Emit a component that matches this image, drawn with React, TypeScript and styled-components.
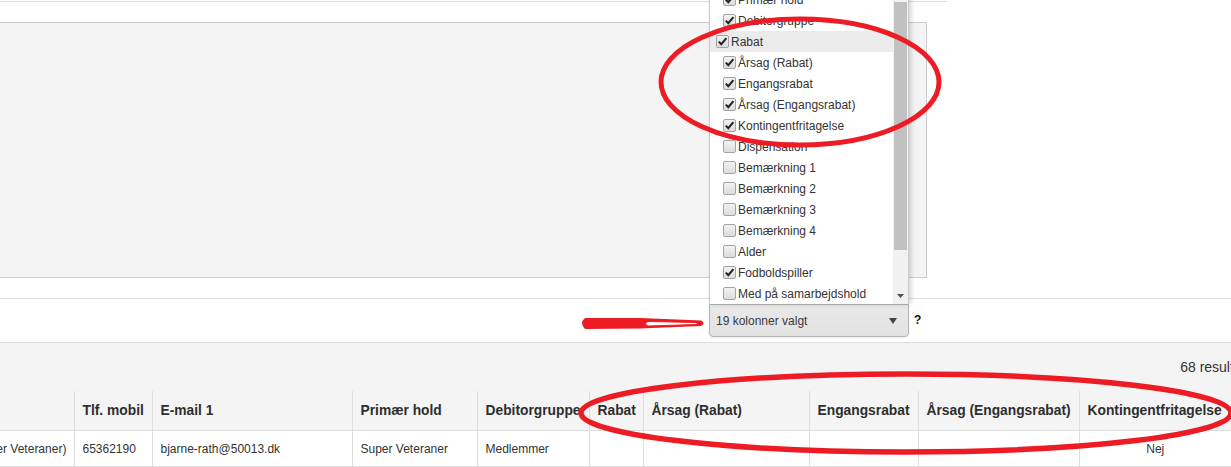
import React from 'react'
import styled, { createGlobalStyle } from 'styled-components'

const GlobalStyle = createGlobalStyle`
  html, body {
    margin: 0;
    padding: 0;
    background: #fff;
    overflow: hidden;
  }
  body {
    font-family: 'Liberation Sans', Arial, sans-serif;
    font-size: 12px;
    color: #333;
  }
`

const Page = styled.div`
  position: relative;
  width: 1231px;
  height: 467px;
  overflow: hidden;
`

const TopRule = styled.div`
  width: 947px;
  height: 20px;
  margin-top: 1px;
  border-top: 1px solid #ddd;
`

const FilterPanel = styled.div`
  width: 926px;
  height: 254px;
  margin-left: -1px;
  background: #f4f4f4;
  border: 1px solid #ccc;
`

const Gap = styled.div`
  height: 20px;
`

const Toolbar = styled.div`
  display: flex;
  align-items: flex-start;
  height: 45px;
  padding: 5px 0 0 709px;
  box-sizing: border-box;
  border-top: 1px solid #ddd;
  border-bottom: 1px solid #ddd;
`

const SelectWrap = styled.div`
  position: relative;
  width: 200px;
`

const Select = styled.div`
  display: flex;
  align-items: center;
  justify-content: space-between;
  height: 33px;
  box-sizing: border-box;
  padding: 0 11px 0 6px;
  background: linear-gradient(#e9e9e9, #e2e2e2);
  border: 1px solid #b4b4b4;
  border-radius: 0 0 4px 4px;
  box-shadow: 0 1px 2px rgba(0, 0, 0, 0.08);
  font-size: 12px;
  color: #3a3a3a;
`

const Caret = styled.span`
  width: 0;
  height: 0;
  border-left: 4px solid transparent;
  border-right: 4px solid transparent;
  border-top: 6px solid #444;
`

const Help = styled.span`
  margin-left: 5px;
  line-height: 33px;
  font-weight: bold;
  font-size: 12px;
  color: #111;
`

const Dropdown = styled.div`
  position: absolute;
  left: 0;
  bottom: 100%;
  width: 200px;
  height: 320px;
  box-sizing: border-box;
  display: flex;
  background: #fff;
  border: 1px solid #ccc;
  border-bottom: none;
  box-shadow: 2px 0 5px rgba(0, 0, 0, 0.18);
  z-index: 5;
`

const OptionList = styled.div`
  flex: 1;
  display: flex;
  flex-direction: column;
  justify-content: flex-end;
  overflow: hidden;
`

const Option = styled.div<{ $active?: boolean }>`
  flex: none;
  display: flex;
  align-items: center;
  height: 21px;
  padding-left: ${({ $active }) => ($active ? '6px' : '13px')};
  background: ${({ $active }) => ($active ? '#ebebeb' : 'transparent')};
  font-size: 12px;
  color: #333;
  white-space: nowrap;
`

const Box = styled.span`
  display: inline-flex;
  align-items: center;
  justify-content: center;
  width: 13px;
  height: 13px;
  box-sizing: border-box;
  margin-right: 2px;
  border: 1px solid #a3a3a3;
  border-radius: 2px;
  background: linear-gradient(#f2f2f2, #dcdcdc);
`

const Scrollbar = styled.div`
  width: 15px;
  display: flex;
  flex-direction: column;
  background: #f1f1f1;
`

const ScrollArrow = styled.div`
  height: 17px;
  display: flex;
  align-items: center;
  justify-content: center;
`

const Thumb = styled.div`
  height: 248px;
  margin: 0 1px;
  background: #c1c1c1;
`

const Track = styled.div`
  flex: 1;
`

const Results = styled.div`
  background: #f4f4f4;
  height: 200px;
`

const ResultsBar = styled.div`
  width: 1273px;
  height: 48px;
  box-sizing: border-box;
  display: flex;
  justify-content: flex-end;
  align-items: center;
  padding-right: 15px;
  font-size: 14px;
  color: #333;
`

const TableWrap = styled.div`
  overflow: hidden;
`

const Table = styled.table`
  margin-left: -37px;
  width: 1268px;
  table-layout: fixed;
  border-collapse: collapse;
`

const Th = styled.th`
  height: 39px;
  padding: 0 8px;
  text-align: left;
  vertical-align: middle;
  font-size: 13.8px;
  font-weight: bold;
  color: #2e2e2e;
  white-space: nowrap;
  border-left: 1px solid #ddd;
  border-bottom: 1px solid #ddd;
  &:first-child {
    border-left: none;
  }
`

const Td = styled.td<{ $center?: boolean }>`
  height: 35px;
  padding: 0 8px;
  text-align: ${({ $center }) => ($center ? 'center' : 'left')};
  font-size: 12px;
  color: #333;
  white-space: nowrap;
  background: #fff;
  border-left: 1px solid #ddd;
  border-bottom: 1px solid #ddd;
  &:first-child {
    border-left: none;
  }
`

const Annotations = styled.svg`
  position: absolute;
  left: 0;
  top: 0;
  pointer-events: none;
  z-index: 10;
`

const columns = [
  { title: '', width: 111 },
  { title: 'Tlf. mobil', width: 78 },
  { title: 'E-mail 1', width: 200 },
  { title: 'Primær hold', width: 125 },
  { title: 'Debitorgruppe', width: 112 },
  { title: 'Rabat', width: 54 },
  { title: 'Årsag (Rabat)', width: 166 },
  { title: 'Engangsrabat', width: 109 },
  { title: 'Årsag (Engangsrabat)', width: 161 },
  { title: 'Kontingentfritagelse', width: 152 },
]

const row = [
  '(Super Veteraner)',
  '65362190',
  'bjarne-rath@50013.dk',
  'Super Veteraner',
  'Medlemmer',
  '',
  '',
  '',
  '',
  'Nej',
]

const options = [
  { label: 'E-mail 1', checked: true },
  { label: 'Primær hold', checked: true },
  { label: 'Debitorgruppe', checked: true },
  { label: 'Rabat', checked: true, active: true },
  { label: 'Årsag (Rabat)', checked: true },
  { label: 'Engangsrabat', checked: true },
  { label: 'Årsag (Engangsrabat)', checked: true },
  { label: 'Kontingentfritagelse', checked: true },
  { label: 'Dispensation', checked: false },
  { label: 'Bemærkning 1', checked: false },
  { label: 'Bemærkning 2', checked: false },
  { label: 'Bemærkning 3', checked: false },
  { label: 'Bemærkning 4', checked: false },
  { label: 'Alder', checked: false },
  { label: 'Fodboldspiller', checked: true },
  { label: 'Med på samarbejdshold', checked: false },
]

function Check({ checked }: { checked: boolean }) {
  return (
    <Box>
      {checked && (
        <svg width="11" height="11" viewBox="0 0 11 11">
          <path d="M1.8 5.6 L4.3 8.2 L9.4 2.2" fill="none" stroke="#222" strokeWidth="2" />
        </svg>
      )}
    </Box>
  )
}

export default function App() {
  return (
    <Page>
      <GlobalStyle />
      <TopRule />
      <FilterPanel />
      <Gap />
      <Toolbar>
        <SelectWrap>
          <Dropdown>
            <OptionList>
              {options.map((o) => (
                <Option key={o.label} $active={o.active}>
                  <Check checked={o.checked} />
                  {o.label}
                </Option>
              ))}
            </OptionList>
            <Scrollbar>
              <ScrollArrow />
              <Thumb />
              <Track />
              <ScrollArrow>
                <svg width="7" height="4" viewBox="0 0 7 4">
                  <path d="M0 0 L7 0 L3.5 4 Z" fill="#505050" />
                </svg>
              </ScrollArrow>
            </Scrollbar>
          </Dropdown>
          <Select>
            <span>19 kolonner valgt</span>
            <Caret />
          </Select>
        </SelectWrap>
        <Help>?</Help>
      </Toolbar>
      <Results>
        <ResultsBar>68 resultater</ResultsBar>
        <TableWrap>
          <Table>
            <colgroup>
              {columns.map((c, i) => (
                <col key={i} style={{ width: c.width }} />
              ))}
            </colgroup>
            <thead>
              <tr>
                {columns.map((c, i) => (
                  <Th key={i}>{c.title}</Th>
                ))}
              </tr>
            </thead>
            <tbody>
              <tr>
                {row.map((v, i) => (
                  <Td key={i} $center={i === row.length - 1}>
                    {v}
                  </Td>
                ))}
              </tr>
            </tbody>
          </Table>
        </TableWrap>
      </Results>
      <Annotations width="1231" height="467" viewBox="0 0 1231 467">
        <ellipse cx="800" cy="82" rx="139" ry="63" fill="none" stroke="#ed1c24" strokeWidth="5" />
        <ellipse cx="906" cy="413" rx="325" ry="39" fill="none" stroke="#ed1c24" strokeWidth="5.5" />
        <path
          d="M585 318 Q579 323 585 329 L640 328.5 L701 326 Q706 323 701 320.5 L640 318 Z"
          fill="#ed1c24"
        />
        <path
          d="M648 321.5 L697 322.5 L697 324.5 L648 326 Q643 323.8 648 321.5 Z"
          fill="#fff"
          stroke="#ed1c24"
          strokeWidth="1"
        />
      </Annotations>
    </Page>
  )
}
